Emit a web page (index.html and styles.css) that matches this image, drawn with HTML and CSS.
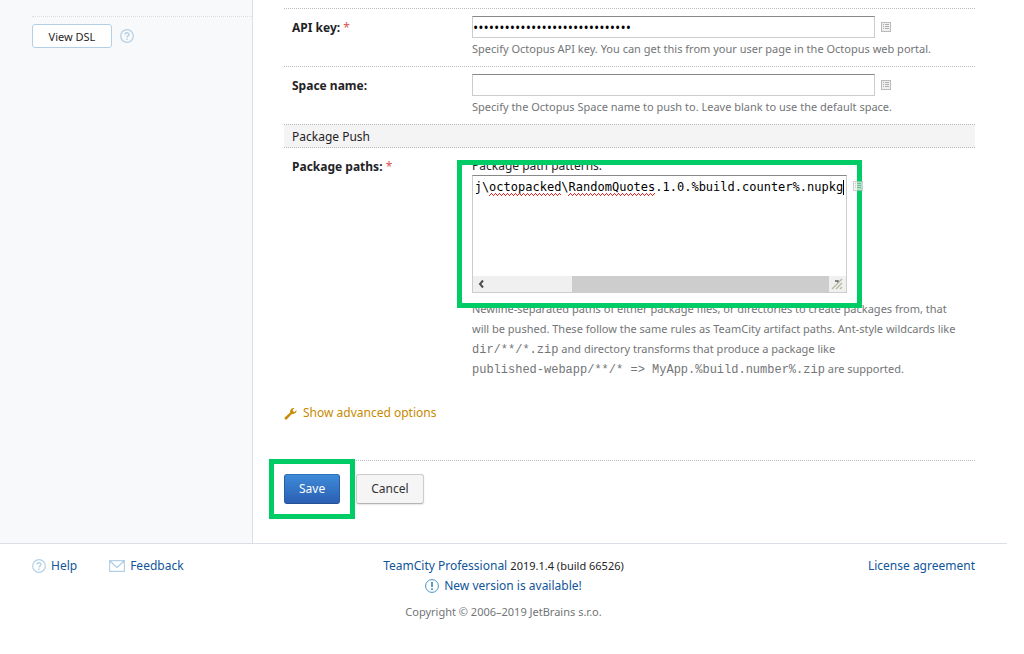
FILE: index.html
```html
<!DOCTYPE html>
<html lang="en">
<head>
    <meta charset="UTF-8">
    <meta name="viewport" content="width=device-width, initial-scale=1.0">
    <title>Build Step - TeamCity</title>
    <link rel="stylesheet" href="styles.css">
</head>
<body>

<!-- shared icons -->
<svg class="sprite" width="0" height="0">
    <symbol id="icon-list" viewBox="0 0 10 10">
        <rect x="0.5" y="0.5" width="9" height="9" fill="#f0f0f0" stroke="#bbb"/>
        <path d="M2 2.5h1M4 2.5h4M2 4.5h1M4 4.5h4M2 6.5h1M4 6.5h4" stroke="#b0b0b0"/>
    </symbol>
    <symbol id="icon-help" viewBox="0 0 14 14">
        <circle cx="7" cy="7" r="6.3" fill="none" stroke="currentColor" stroke-width="1.2"/>
        <path d="M5 5.6C5 3.2 9 3.2 9 5.5C9 6.9 7 6.9 7 8.5M7 9.6v1.4" fill="none" stroke="currentColor" stroke-width="1.4"/>
    </symbol>
</svg>

<div class="page">
    <div class="main">
        <aside class="sidebar">
            <div class="sidebar-actions">
                <button class="dsl-btn" type="button">View DSL</button>
                <svg class="help-icon" width="14" height="14"><use href="#icon-help"/></svg>
            </div>
        </aside>

        <form class="settings">
            <div class="row">
                <label class="row-label" for="apiKey">API key: <span class="required">*</span></label>
                <div class="row-value">
                    <div class="field">
                        <input class="text-input" id="apiKey" type="password" value="API-00000000000000000000000000">
                        <svg class="list-icon" width="10" height="10"><use href="#icon-list"/></svg>
                    </div>
                    <p class="hint">Specify Octopus API key. You can get this from your user page in the Octopus web portal.</p>
                </div>
            </div>

            <div class="row">
                <label class="row-label" for="spaceName">Space name:</label>
                <div class="row-value">
                    <div class="field">
                        <input class="text-input" id="spaceName" type="text">
                        <svg class="list-icon" width="10" height="10"><use href="#icon-list"/></svg>
                    </div>
                    <p class="hint">Specify the Octopus Space name to push to. Leave blank to use the default space.</p>
                </div>
            </div>

            <div class="section-title">Package Push</div>

            <div class="row row-paths">
                <div class="row-label">Package paths: <span class="required">*</span></div>
                <div class="row-value">
                    <div class="paths">
                        <label class="paths-label" for="paths">Package path patterns:</label>
                        <div class="field">
                            <div class="editor">
                                <textarea class="editor-text" id="paths" wrap="off" spellcheck="false">\obj\octopacked\RandomQuotes.1.0.%build.counter%.nupkg</textarea>
                                <span class="typo typo-octopacked"></span>
                                <span class="typo typo-quotes"></span>
                                <span class="caret"></span>
                                <div class="scrollbar">
                                    <svg class="scroll-arrow" width="16" height="16" viewBox="0 0 16 16"><path d="M10 4.5L7 8l3 3.5" fill="none" stroke="#505050" stroke-width="2"/></svg>
                                    <span class="scroll-thumb"></span>
                                    <svg class="scroll-grip" width="17" height="16" viewBox="0 0 17 16"><path d="M6 5h3v2" fill="none" stroke="#606060" stroke-width="1.5"/><path d="M3 13l10-10M7 13l6-6M11 13l2-2" stroke="#b9b8a2" stroke-width="1.4"/></svg>
                                </div>
                            </div>
                            <svg class="list-icon list-icon-top" width="10" height="10"><use href="#icon-list"/></svg>
                        </div>
                        <div class="highlight highlight-paths"></div>
                    </div>
                    <p class="hint hint-long">Newline-separated paths of either package files, or directories to create packages from, that will be pushed. These follow the same rules as TeamCity artifact paths. Ant-style wildcards like <code>dir/**/*.zip</code> and directory transforms that produce a package like <code>published-webapp/**/* =&gt; MyApp.%build.number%.zip</code> are supported.</p>
                </div>
            </div>

            <a class="advanced" href="#">
                <svg width="13" height="13" viewBox="0 0 13 13"><path d="M0.8 10.4L6.2 5.4C5.7 2.6 7.6 0.6 10.5 1L8.6 3l.5 1.5 1.6.4L12.4 3C13 5.8 10.6 7.4 8 6.8L2.9 12.2C1.6 13.2 0 11.7 0.8 10.4Z" fill="#c88a00"/></svg>
                Show advanced options
            </a>

            <div class="buttons">
                <div class="save-wrap">
                    <button class="btn btn-primary" type="submit">Save</button>
                    <div class="highlight highlight-save"></div>
                </div>
                <button class="btn" type="button">Cancel</button>
            </div>
        </form>
    </div>

    <footer class="footer">
        <div class="footer-left">
            <a href="#"><svg class="help-icon" width="14" height="14"><use href="#icon-help"/></svg>Help</a>
            <a href="#"><svg width="16" height="12" viewBox="0 0 16 12"><path d="M0.5 0.5h15v11H0.5zM1 1l7 6.5L15 1" fill="none" stroke="#b4d0e6" stroke-width="1.3"/></svg>Feedback</a>
        </div>
        <div class="footer-center">
            <div class="version"><a href="#">TeamCity Professional</a> <span class="build">2019.1.4 (build 66526)</span></div>
            <div class="update"><a href="#"><svg width="14" height="14" viewBox="0 0 14 14"><circle cx="7" cy="7" r="6.4" fill="none" stroke="#4a93c8"/><path d="M7 3v5M7 9.3v1.7" stroke="#4a93c8" stroke-width="1.8"/></svg>New version is available!</a></div>
            <div class="copyright">Copyright © 2006–2019 JetBrains s.r.o.</div>
        </div>
        <div class="footer-right"><a href="#">License agreement</a></div>
    </footer>
</div>

<script>
    // keep the end of the path in view
    const paths = document.getElementById('paths');
    paths.scrollLeft = paths.scrollWidth;
</script>

</body>
</html>
```
FILE: styles.css
```css
body {
    margin: 0;
    background-color: #fff;
    color: #1f2326;
    font-family: "Noto Sans", "Open Sans", sans-serif;
    font-size: 12px;
    line-height: 18px;
}

a {
    color: #10559a;
    text-decoration: none;
}

.sprite {
    position: absolute;
}

.page {
    margin-right: 17px;
}

.main {
    display: flex;
}

/* Sidebar */
.sidebar {
    flex: 0 0 220px;
    padding: 16px 0 0 32px;
    background-color: #f7f9fb;
    border-right: 1px solid #dadfe5;
}

.sidebar-actions {
    display: flex;
    align-items: center;
    gap: 8px;
    padding-top: 7px;
    border-top: 1px dotted #dadfe5;
}

.dsl-btn {
    width: 80px;
    height: 24px;
    padding: 0;
    background-color: #fff;
    border: 1px solid #b4d0e6;
    border-radius: 3px;
    color: #1f2326;
    font: 11px "Noto Sans", sans-serif;
}

.help-icon {
    color: #b4d0e6;
}

/* Settings form */
.settings {
    flex: 1;
    padding: 8px 32px 39px 31px;
}

.row {
    display: flex;
    padding: 7px 0 8px 8px;
    border-top: 1px dotted #bbb;
}

.row-label {
    flex: 0 0 180px;
    padding-top: 3px;
    font-weight: bold;
}

.required {
    color: #d9534f;
    font-weight: normal;
}

.row-value {
    flex: 1;
}

.field {
    display: flex;
    align-items: center;
    gap: 6px;
}

.text-input {
    box-sizing: border-box;
    width: 403px;
    height: 22px;
    padding: 0;
    background-color: #fff;
    border: 1px solid #ccc;
    border-top-color: #888;
    font: 14px "Open Sans", sans-serif;
}

.hint {
    margin: 2px 0 0;
    color: #737577;
    font-size: 11px;
}

.section-title {
    padding: 3px 8px 1px;
    background-color: #f4f4f4;
    border-top: 1px dotted #bbb;
    border-bottom: 1px dotted #bbb;
}

.row-paths {
    padding-top: 9px;
    border-top: 0;
}

.row-paths .row-label {
    padding-top: 1px;
}

.paths {
    position: relative;
}

.paths-label {
    display: block;
}

.editor {
    position: relative;
    box-sizing: border-box;
    width: 375px;
    height: 118px;
    background-color: #fff;
    border: 1px solid #ccc;
    border-top-color: #888;
}

.editor-text {
    display: block;
    box-sizing: border-box;
    width: 367px;
    height: 100px;
    margin-left: 3px;
    padding: 2px 0;
    background: none;
    border: 0;
    outline: 0;
    resize: none;
    overflow: hidden;
    color: #000;
    font: 12px/18px "DejaVu Sans Mono", monospace;
}

/* spelling marks under the path */
.typo {
    position: absolute;
    top: 17px;
    height: 3px;
    background:
        linear-gradient(90deg, transparent 2px, #e22 2px 3px, transparent 3px) 0 0 / 4px 1px repeat-x,
        linear-gradient(90deg, transparent 1px, #e22 1px) 0 1px / 2px 1px repeat-x,
        linear-gradient(90deg, #e22 1px, transparent 1px) 0 2px / 4px 1px repeat-x;
}

.typo-octopacked {
    left: 16px;
    width: 72px;
}

.typo-quotes {
    left: 95px;
    width: 87px;
}

.caret {
    position: absolute;
    top: 4px;
    right: 2px;
    width: 1px;
    height: 15px;
    background-color: #000;
}

.scrollbar {
    display: flex;
    height: 16px;
    background-color: #f0f0f0;
}

.scroll-arrow {
    margin-right: auto;
}

.scroll-thumb {
    width: 257px;
    background-color: #cdcdcd;
}

.list-icon-top {
    align-self: flex-start;
    position: relative;
    z-index: 2;
    margin-top: 6px;
    opacity: .7;
}

.hint-long {
    margin-top: 6px;
    padding-right: 12px;
    line-height: 20px;
}

.hint-long code {
    font: 12px/16px "Liberation Mono", monospace;
    white-space: nowrap;
}

/* Green frames around the fields to fill in */
.highlight {
    position: absolute;
    box-sizing: border-box;
    border: 5px solid #00cc66;
    pointer-events: none;
}

.highlight-paths {
    top: 3px;
    left: -15px;
    width: 405px;
    height: 148px;
}

.highlight-save {
    inset: -15px;
}

.advanced {
    display: inline-flex;
    align-items: center;
    gap: 6px;
    margin-top: 17px;
    color: #c88a00;
}

.buttons {
    display: flex;
    gap: 16px;
    margin-top: 35px;
    padding-top: 13px;
    border-top: 1px dotted #bbb;
}

.save-wrap {
    position: relative;
}

.btn {
    height: 30px;
    padding: 0 14px;
    background-color: #f5f5f5;
    border: 1px solid #ccc;
    border-bottom-color: #b5b5b5;
    border-radius: 3px;
    box-shadow: 0 1px 2px rgba(0, 0, 0, .1);
    color: #333;
    font: 12px "Noto Sans", sans-serif;
}

.btn-primary {
    background: linear-gradient(#3e8bd8, #2b5fb3);
    border-color: #2d6fbd #2a5ca8 #244f94;
    box-shadow: none;
    color: #fff;
}

/* Footer */
.footer {
    display: grid;
    grid-template-columns: 1fr auto 1fr;
    padding: 13px 32px 30px;
    border-top: 1px solid #dadfe5;
}

.footer a {
    display: inline-flex;
    align-items: center;
    gap: 5px;
}

.footer-left {
    display: flex;
    align-items: flex-start;
    gap: 32px;
}

.footer-center {
    text-align: center;
}

.build {
    font-size: 11px;
}

.update {
    margin-top: 2px;
}

.copyright {
    margin-top: 5px;
    color: #737577;
    font-size: 11px;
}

.footer-right {
    text-align: right;
}
```
